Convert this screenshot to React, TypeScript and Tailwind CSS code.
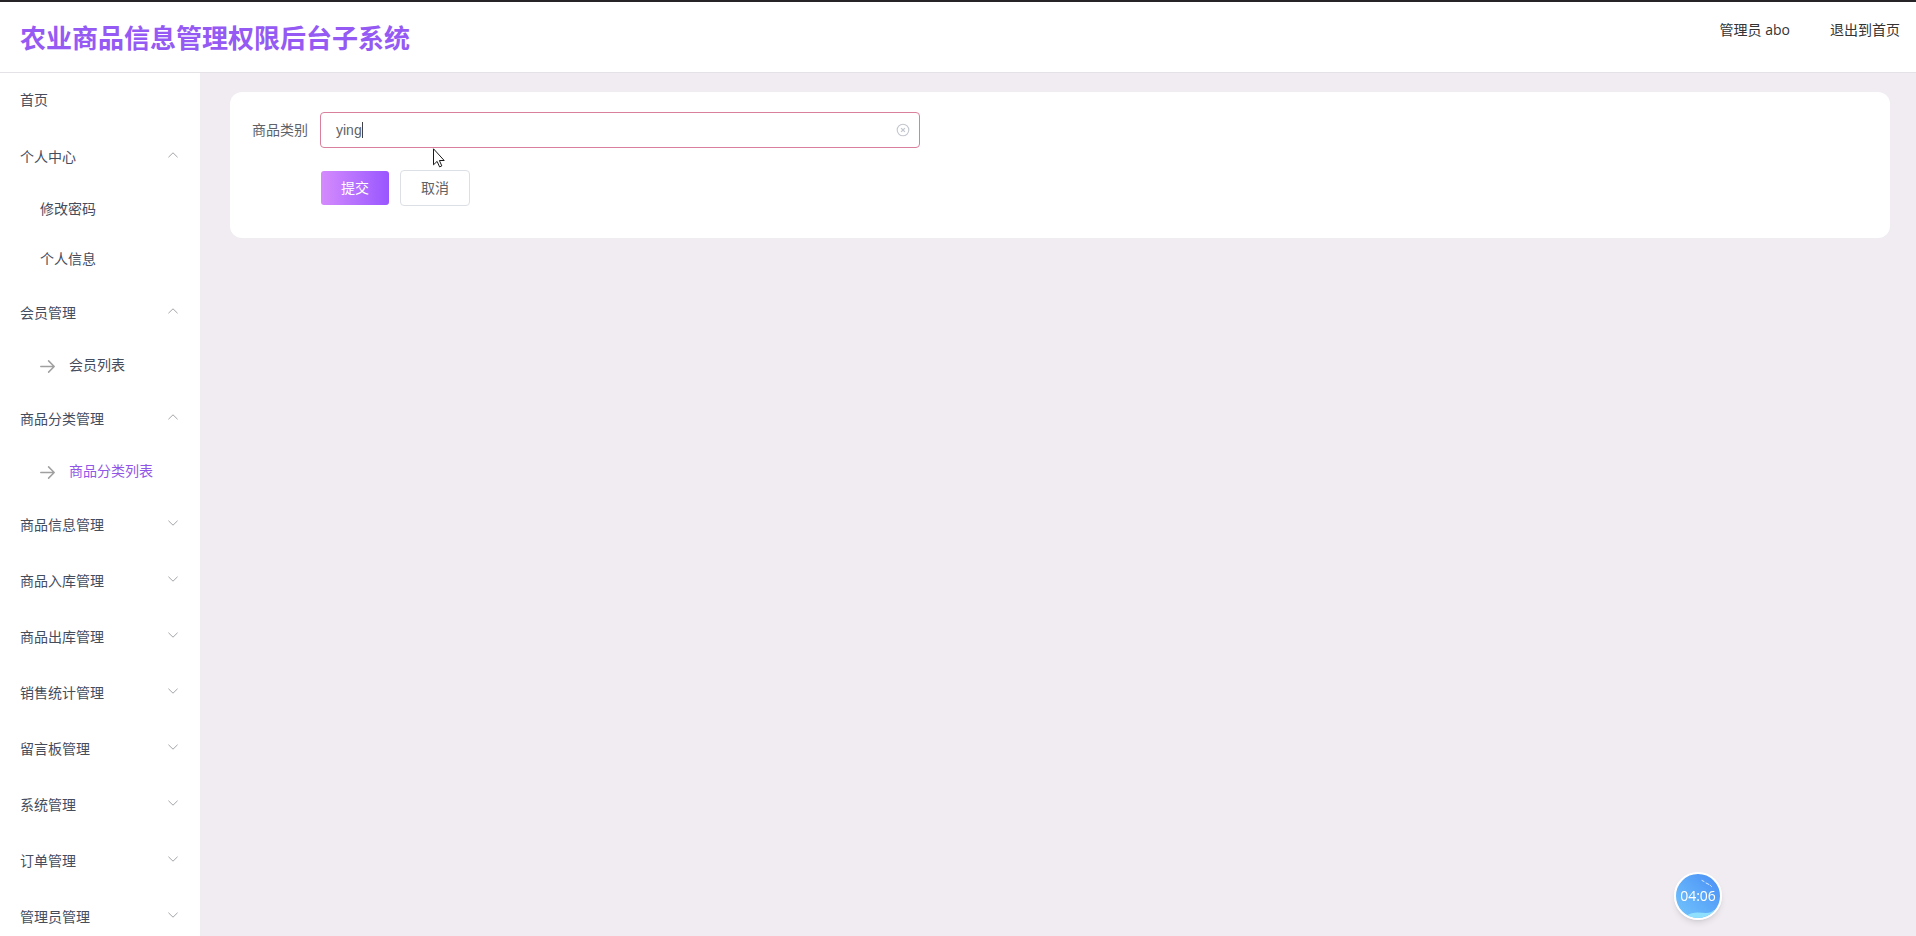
import { useState } from "react";
import clsx from "clsx";

type MenuGroup = {
  title: string;
  open?: boolean;
  arrow?: boolean;
  children?: string[];
};

const MENU: MenuGroup[] = [
  { title: "个人中心", open: true, children: ["修改密码", "个人信息"] },
  { title: "会员管理", open: true, arrow: true, children: ["会员列表"] },
  { title: "商品分类管理", open: true, arrow: true, children: ["商品分类列表"] },
  { title: "商品信息管理" },
  { title: "商品入库管理" },
  { title: "商品出库管理" },
  { title: "销售统计管理" },
  { title: "留言板管理" },
  { title: "系统管理" },
  { title: "订单管理" },
  { title: "管理员管理" },
];

const ACTIVE = "商品分类列表";

function Chevron({ up }: { up?: boolean }) {
  return (
    <svg
      viewBox="0 0 14 14"
      className={clsx("mb-1 size-3.5 shrink-0", up && "rotate-180")}
      fill="none"
      stroke="#a3a5aa"
      strokeWidth="1"
      strokeLinecap="round"
      strokeLinejoin="round"
    >
      <path d="M2.7 5l4.3 4.2L11.3 5" />
    </svg>
  );
}

function ArrowRight() {
  return (
    <svg
      viewBox="0 0 16 16"
      className="size-4 shrink-0"
      fill="none"
      stroke="#a0a0a0"
      strokeWidth="1.5"
      strokeLinecap="round"
      strokeLinejoin="round"
    >
      <path d="M.8 9.5h13.4M8.6 3.9l5.6 5.6-5.6 5.6" />
    </svg>
  );
}

function Sidebar() {
  return (
    <nav className="w-50 shrink-0 overflow-hidden bg-white text-[#454c5c]">
      <a href="#home" className="flex h-14 items-center px-5 pb-0.5">
        首页
      </a>
      {MENU.map((group) => (
        <div key={group.title}>
          <button
            type="button"
            className="flex h-14 w-full items-center justify-between px-5"
          >
            {group.title}
            <Chevron up={group.open} />
          </button>
          {group.children?.map((item) => (
            <a
              key={item}
              href="#list"
              className={clsx(
                "flex h-[50px] items-center gap-[13px] pb-0.5 pl-10",
                item === ACTIVE && "text-[#9057e6]"
              )}
            >
              {group.arrow && <ArrowRight />}
              {item}
            </a>
          ))}
        </div>
      ))}
    </nav>
  );
}

function CategoryForm() {
  const [category, setCategory] = useState("ying");

  return (
    <form
      className="flex gap-3 rounded-xl bg-white px-[22px] pt-5 pb-8 text-[#606266]"
      onSubmit={(e) => e.preventDefault()}
    >
      <label htmlFor="category" className="h-9 leading-9">
        商品类别
      </label>
      <div className="flex w-150 flex-col gap-[22px]">
        <div className="relative">
          <input
            id="category"
            type="text"
            value={category}
            onChange={(e) => setCategory(e.target.value)}
            className="block h-9 w-full rounded border border-[#d9809c] pr-8 pl-[15px] font-['Liberation_Sans',sans-serif] outline-none"
          />
          {/* text caret */}
          <span className="absolute top-2.5 left-[42px] h-4 w-px bg-[#404246]" />
          <button
            type="button"
            aria-label="清空"
            className="absolute inset-y-0 right-2.5 flex items-center"
            onClick={() => setCategory("")}
          >
            <svg
              viewBox="0 0 14 14"
              className="size-3.5"
              fill="none"
              stroke="#c4c7ce"
              strokeWidth="1.1"
            >
              <circle cx="7" cy="7" r="5.8" />
              <path d="M5.1 5.1l3.8 3.8M8.9 5.1L5.1 8.9" strokeWidth="1.3" />
            </svg>
          </button>
          {/* mouse pointer */}
          <svg
            viewBox="0 0 13 20"
            className="pointer-events-none absolute top-9 left-[112px] h-5 w-[13px]"
            fill="#fff"
            stroke="#1a1a1a"
            strokeWidth="1"
          >
            <path d="M1.5.8v16l3.6-3.4 2.5 5.5 2.2-1-2.4-5.4h4.8z" />
          </svg>
        </div>
        <div className="flex gap-2.5">
          <button
            type="submit"
            className="h-9 rounded border border-transparent bg-linear-to-r from-[#d58afc] to-[#9a55ff] bg-clip-padding px-5 text-white"
          >
            提交
          </button>
          <button
            type="button"
            className="h-9 rounded border border-[#dcdfe6] bg-white px-5"
          >
            取消
          </button>
        </div>
      </div>
    </form>
  );
}

function TimerBadge() {
  return (
    <div className="fixed right-[194px] bottom-4 flex size-12 items-center justify-center overflow-hidden rounded-full border-2 border-white bg-linear-to-tr from-[#74c6fc] to-[#4a8df5] text-sm text-white shadow-md">
      <svg viewBox="0 0 44 44" className="absolute inset-0 size-full" fill="none">
        <path d="M10 42c7-5 14-3 20-3 4 0 6-1 8-3v8H10z" fill="#8fe0fd" />
        <path
          d="M26 6.5l2 1M30 9l3 1.5M34.5 11.5l1 1"
          stroke="#d6eaff"
          strokeWidth="1"
          strokeLinecap="round"
        />
      </svg>
      <span className="relative">04:06</span>
    </div>
  );
}

export default function App() {
  return (
    <div className="flex h-screen flex-col overflow-hidden bg-[#f0ecf2] font-['Open_Sans','Noto_Sans_CJK_SC',sans-serif] text-sm">
      <header className="flex h-[73px] shrink-0 items-start justify-between border-t-2 border-b border-t-[#262426] border-b-[#e4e2e6] bg-white pr-4 pl-5">
        <h1 className="pt-4 text-[26px] leading-10 font-bold text-[#955af3]">
          农业商品信息管理权限后台子系统
        </h1>
        <div className="flex gap-10 pt-4 leading-6 text-[#333]">
          <span>管理员 abo</span>
          <a href="#front">退出到首页</a>
        </div>
      </header>
      <div className="flex min-h-0 grow">
        <Sidebar />
        <main className="grow pt-[19px] pr-[26px] pl-[30px]">
          <CategoryForm />
        </main>
      </div>
      <TimerBadge />
    </div>
  );
}
